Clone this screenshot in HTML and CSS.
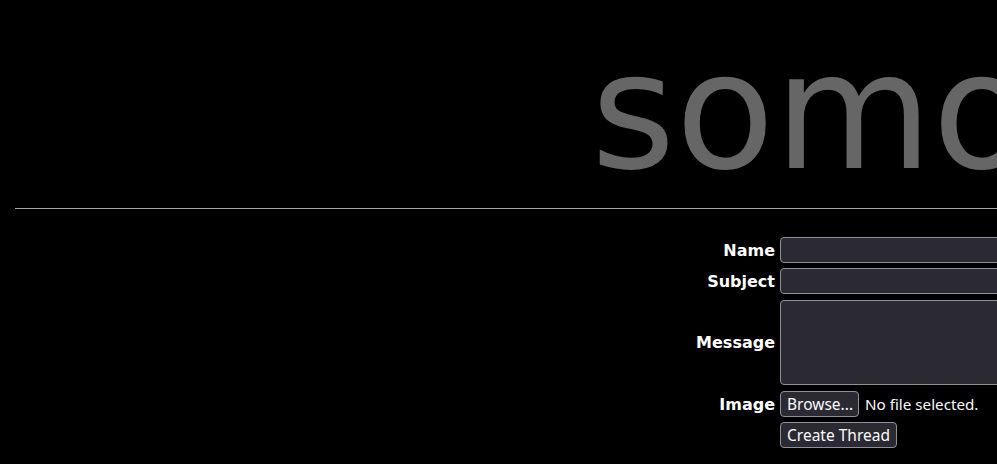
FILE: index.html
```html
<!DOCTYPE html>
<html lang="en">
<head>
<meta charset="utf-8">
<title>somo</title>
<link rel="stylesheet" href="styles.css">
</head>
<body>
<div class="page">
  <header class="banner">
    <h1 class="title">somochan</h1>
  </header>
  <hr class="rule">
  <form class="post-form">
    <label class="label" for="name">Name</label>
    <div class="field"><input class="text-input" id="name" type="text"></div>
    <label class="label" for="subject">Subject</label>
    <div class="field"><input class="text-input" id="subject" type="text"></div>
    <label class="label" for="message">Message</label>
    <div class="field"><textarea class="text-area" id="message"></textarea></div>
    <span class="label">Image</span>
    <div class="field file-field"><button type="button" class="btn btn-browse">Browse...</button><span class="file-status">No file selected.</span></div>
    <span class="label"></span>
    <div class="field"><button type="submit" class="btn">Create Thread</button></div>
  </form>
</div>
</body>
</html>
```
FILE: styles.css
```css
html, body {
  margin: 0;
  padding: 0;
  background: #000;
}
body {
  width: 997px;
  height: 464px;
  overflow: hidden;
  font-family: "DejaVu Sans", Verdana, sans-serif;
  color: #fff;
}
.page {
  width: 1400px;
}
.banner {
  padding-left: 591px;
  padding-top: 31px;
}
.title {
  margin: 0;
  height: 162px;
  font-size: 162px;
  line-height: 1;
  font-weight: normal;
  color: #666;
  white-space: nowrap;
  font-family: "DejaVu Sans", Verdana, sans-serif;
}
.rule {
  margin: 15px 0 0 15px;
  border: 0;
  height: 1px;
  background: #a6a6a6;
}
.post-form {
  display: grid;
  grid-template-columns: 775px 1fr;
  column-gap: 5px;
  row-gap: 5px;
  align-items: center;
  margin-top: 28px;
}
.label {
  text-align: right;
  font-weight: bold;
  font-size: 16px;
  color: #fff;
}
.field {
  display: flex;
  align-items: center;
}
.text-input {
  box-sizing: border-box;
  width: 300px;
  height: 26px;
  margin: 0;
  background: #2b2a33;
  border: 1px solid #8f8f9d;
  border-radius: 4px;
  color: #fff;
}
.text-area {
  box-sizing: border-box;
  width: 300px;
  height: 85px;
  margin: 1px 0;
  background: #2b2a33;
  border: 1px solid #8f8f9d;
  border-radius: 4px;
  color: #fff;
  resize: none;
}
.btn {
  box-sizing: border-box;
  height: 26px;
  margin: 0;
  padding: 0 6px;
  background: #2b2a33;
  border: 1px solid #8f8f9d;
  border-radius: 4px;
  color: #fbfbfe;
  font-family: "Noto Sans", "Open Sans", sans-serif;
  font-size: 15.5px;
  line-height: 22px;
}
.btn-browse {
  padding: 0 5px 0 6px;
}
.file-status {
  margin-left: 6px;
  font-family: "Noto Sans", "Open Sans", sans-serif;
  font-size: 15.2px;
  color: #fbfbfe;
}
```
